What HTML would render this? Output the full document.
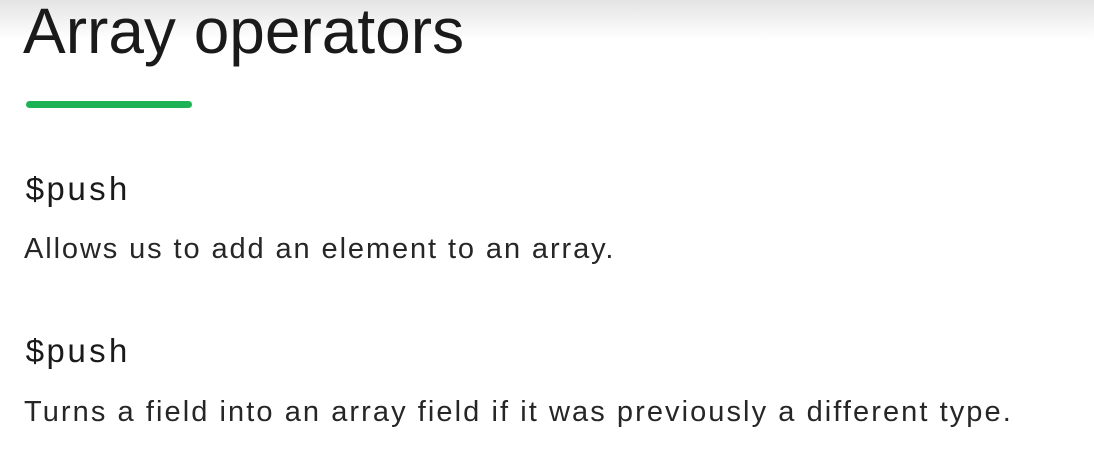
<!DOCTYPE html>
<html><head><style>
body{margin:0;width:1094px;height:473px;overflow:hidden;background:#fff;font-family:"Liberation Sans",sans-serif;color:#1a1a1a;position:relative}
.top{position:absolute;left:0;top:0;width:1094px;height:40px;background:linear-gradient(#e4e4e4,#fff)}
.t{position:absolute;white-space:nowrap}
</style></head><body>
<div class="top"></div>
<div class="t" style="left:23px;top:-6px;font-size:64px;letter-spacing:0px;line-height:74px;color:#1a1a1a">Array operators</div>
<div style="position:absolute;left:26px;top:101px;width:166px;height:7px;border-radius:4px;background:#1db355"></div>
<div class="t" style="left:25px;top:172px;font-family:'Liberation Mono',monospace;font-size:33px;line-height:40px;letter-spacing:1px">$push</div>
<div class="t" style="left:24px;top:231px;font-size:29px;line-height:36px;letter-spacing:1.9px;color:#262626">Allows us to add an element to an array.</div>
<div class="t" style="left:25px;top:334px;font-family:'Liberation Mono',monospace;font-size:33px;line-height:40px;letter-spacing:1px">$push</div>
<div class="t" style="left:24px;top:394px;font-size:29px;line-height:36px;letter-spacing:2.07px;color:#262626">Turns a field into an array field if it was previously a different type.</div>
</body></html>
